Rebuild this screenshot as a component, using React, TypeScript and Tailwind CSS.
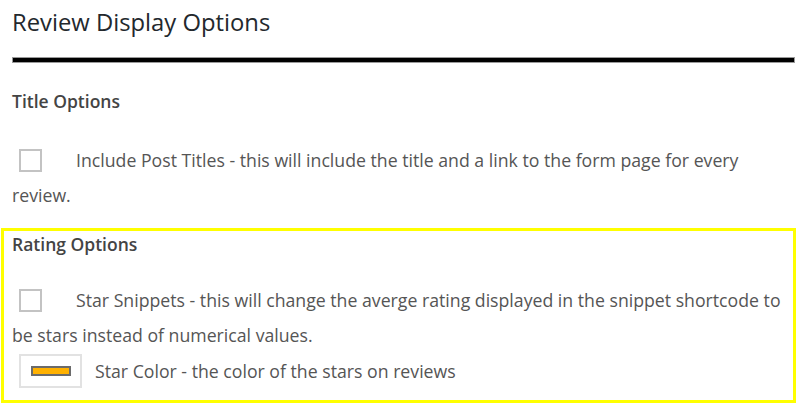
import React from 'react';

const Checkbox: React.FC = () => (
  <span className="inline-block w-[23px] h-[23px] border-2 border-[#c3c3c3] bg-white align-middle ml-[7px] mr-[34px] -mt-[4px]" />
);

export default function App() {
  return (
    <div className="w-[800px] h-[409px] bg-white overflow-hidden text-[#555] font-['Open_Sans',sans-serif]">
      <div className="pl-[12px] pr-[5px] pt-[6px]">
        <h2 className="text-[23.8px] leading-[32px] text-[#23282d] font-normal">Review Display Options</h2>
        <div className="mt-[19px] h-[6px] bg-black border border-[#9a9a9a]" />
        <h3 className="mt-[27px] text-[17.5px] leading-[22px] font-semibold text-[#444]">Title Options</h3>
        <p className="mt-[31px] text-[17.7px] leading-[35px]">
          <Checkbox />
          Include Post Titles - this will include the title and a link to the form page for every review.
        </p>
      </div>
      <div className="mt-[15px] ml-[1px] w-[795px] border-[3px] border-[#ffff00] pl-[8px] pr-[4px] pt-[2px] pb-[12px]">
        <h3 className="text-[17.5px] leading-[22px] font-semibold text-[#444]">Rating Options</h3>
        <p className="mt-[28px] text-[17.7px] leading-[35px]">
          <Checkbox />
          Star Snippets - this will change the averge rating displayed in the snippet shortcode to be stars instead of numerical values.
        </p>
        <div className="flex items-center mt-[1px]">
          <span className="ml-[7px] w-[63px] h-[34px] border-2 border-[#e2e2e2] bg-white flex items-center justify-center">
            <span className="w-[40px] h-[10px] bg-[#ffb100] border-2 border-[#6b6b6b]" />
          </span>
          <span className="ml-[13px] text-[17.7px] leading-[22px]">Star Color - the color of the stars on reviews</span>
        </div>
      </div>
    </div>
  );
}
